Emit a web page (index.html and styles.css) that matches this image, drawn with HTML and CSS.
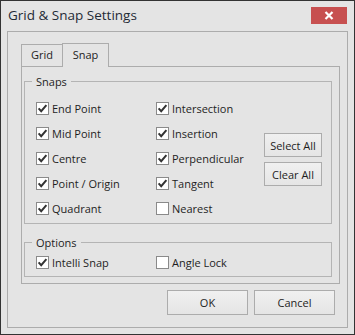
FILE: index.html
```html
<!DOCTYPE html>
<html lang="en">
<head>
    <meta charset="UTF-8">
    <title>Grid &amp; Snap Settings</title>
    <link rel="stylesheet" href="styles.css">
</head>
<body>

    <div class="window">
        <div class="titlebar">
            <span class="title">Grid &amp; Snap Settings</span>
            <button class="close-button">
                <svg width="10" height="9" viewBox="0 0 10 9">
                    <path d="M1.5 1 L8.5 8 M8.5 1 L1.5 8" stroke="#ffffff" stroke-width="2.2"/>
                </svg>
            </button>
        </div>

        <div class="panel">
            <div class="tabs">
                <div class="tab">Grid</div>
                <div class="tab active">Snap</div>
            </div>

            <div class="tab-page">
                <fieldset class="group snaps">
                    <legend>Snaps</legend>
                    <div class="group-body">
                        <div class="col">
                            <label class="check"><span class="box on"></span>End Point</label>
                            <label class="check"><span class="box on"></span>Mid Point</label>
                            <label class="check"><span class="box on"></span>Centre</label>
                            <label class="check"><span class="box on"></span>Point / Origin</label>
                            <label class="check"><span class="box on"></span>Quadrant</label>
                        </div>
                        <div class="col col-2">
                            <label class="check"><span class="box on"></span>Intersection</label>
                            <label class="check"><span class="box on"></span>Insertion</label>
                            <label class="check"><span class="box on"></span>Perpendicular</label>
                            <label class="check"><span class="box on"></span>Tangent</label>
                            <label class="check"><span class="box"></span>Nearest</label>
                        </div>
                        <div class="side-buttons">
                            <button class="button small">Select All</button>
                            <button class="button small">Clear All</button>
                        </div>
                    </div>
                </fieldset>

                <fieldset class="group options">
                    <legend>Options</legend>
                    <div class="group-body">
                        <div class="col">
                            <label class="check"><span class="box on"></span>Intelli Snap</label>
                        </div>
                        <div class="col col-2">
                            <label class="check"><span class="box"></span>Angle Lock</label>
                        </div>
                    </div>
                </fieldset>
            </div>

            <div class="footer">
                <button class="button wide">OK</button>
                <button class="button wide">Cancel</button>
            </div>
        </div>
    </div>

</body>
</html>
```

FILE: styles.css
```css
body {
    margin: 0;
    padding: 0;
    font-family: 'Open Sans', 'Noto Sans', sans-serif;
    font-size: 11px;
    color: #1e1e1e;
}

.window {
    width: 355px;
    height: 335px;
    box-sizing: border-box;
    border: 1px solid #333333;
    background: #e4e4e4;
    display: flex;
    flex-direction: column;
}

.titlebar {
    height: 30px;
    flex-shrink: 0;
    display: flex;
    justify-content: space-between;
    align-items: flex-start;
    padding: 0 7px 0 7px;
}

.title {
    font-size: 13.5px;
    line-height: 30px;
    color: #1f2a36;
    margin-top: -1px;
}

.close-button {
    margin-top: 6px;
    width: 36px;
    height: 17px;
    border: none;
    padding: 0;
    background: #c75050;
    display: flex;
    justify-content: center;
    align-items: center;
}

.panel {
    flex: 1;
    margin: 0 6px 6px 6px;
    border: 1px solid #acacac;
    padding: 11px 7px 0 13px;
    display: flex;
    flex-direction: column;
}

.tabs {
    display: flex;
    align-items: flex-end;
    height: 23px;
}

.tab {
    height: 22px;
    box-sizing: border-box;
    line-height: 20px;
    text-align: center;
    border: 1px solid #acacac;
    border-bottom: none;
    width: 41px;
    border-right: none;
}

.tab.active {
    height: 24px;
    width: 47px;
    border-right: 1px solid #acacac;
    margin-bottom: -1px;
    background: #e4e4e4;
    position: relative;
    line-height: 22px;
}

.tab-page {
    height: 218px;
    box-sizing: border-box;
    border: 1px solid #acacac;
    padding: 7px 7px 6px 2px;
}

.group {
    margin: 0;
    border: 1px solid #b4b4b4;
    padding: 7px 0 2px 7px;
    min-width: 0;
}

.group legend {
    padding: 0 4px;
    line-height: 15px;
}

.options {
    margin-top: 11px;
    padding-top: 0;
    padding-bottom: 1px;
}

.group-body {
    display: flex;
    padding-left: 4px;
}

.col {
    width: 120px;
    display: flex;
    flex-direction: column;
}

.col-2 {
    width: 108px;
}

.check {
    height: 25px;
    display: flex;
    align-items: center;
}

.box {
    width: 13px;
    height: 13px;
    box-sizing: border-box;
    border: 1px solid #8a8a8a;
    background: #ffffff;
    margin-right: 3px;
    flex-shrink: 0;
}

.box.on {
    background: #ffffff url("data:image/svg+xml;utf8,<svg xmlns='http://www.w3.org/2000/svg' width='11' height='11' viewBox='0 0 11 11'><path d='M1.6 5.4 L4.2 8.2 L9.4 2.2' fill='none' stroke='%23333333' stroke-width='2'/></svg>") no-repeat center;
}

.side-buttons {
    display: flex;
    flex-direction: column;
    gap: 5px;
    margin-top: 37px;
}

.button {
    font-family: 'Open Sans', 'Noto Sans', sans-serif;
    font-size: 11px;
    color: #1e1e1e;
    border: 1px solid #acacac;
    background: linear-gradient(#f0f0f0, #e5e5e5);
    padding: 0;
}

.button.small {
    width: 58px;
    height: 24px;
}

.footer {
    display: flex;
    justify-content: flex-end;
    gap: 6px;
    margin-top: 6px;
    padding-right: 5px;
}

.button.wide {
    width: 81px;
    height: 25px;
}
```
